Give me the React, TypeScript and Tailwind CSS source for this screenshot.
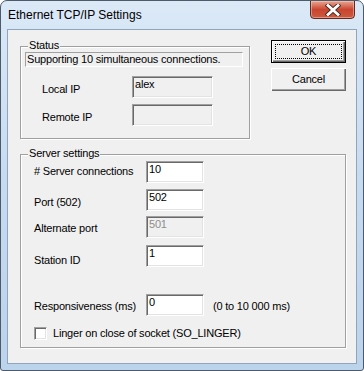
import React from 'react';

const font = "font-['Liberation_Sans',Arial,sans-serif]";

// classic sunken edit box
const editCls =
  'border border-t-[#a0a0a0] border-l-[#a0a0a0] border-r-white border-b-white shadow-[inset_1px_1px_0_#696969,inset_-1px_-1px_0_#e3e3e3] px-[2px] pt-[1px] text-[11px] leading-[13px]';

const Edit: React.FC<{ value: string; w: string; readOnly?: boolean; disabled?: boolean }> = ({ value, w, readOnly, disabled }) => (
  <div
    className={`${editCls} ${w} h-[22px] ${readOnly || disabled ? 'bg-[#f0f0f0]' : 'bg-white'} ${
      disabled ? 'text-[#8d8d8d]' : 'text-black'
    }`}
  >
    {value}
  </div>
);

const GroupBox: React.FC<{ title: string; className: string; children: React.ReactNode }> = ({ title, className, children }) => (
  <div className={`relative border border-[#a0a0a0] shadow-[inset_1px_1px_0_#fff,1px_1px_0_#fff] ${className}`}>
    <span className="absolute left-[7px] -top-[8px] bg-[#f0f0f0] px-[1px] text-[11px] leading-[13px]">{title}</span>
    {children}
  </div>
);

const Button: React.FC<{ label: string; isDefault?: boolean }> = ({ label, isDefault }) => (
  <div
    className={`w-[75px] h-[23px] bg-[#f0f0f0] flex items-center justify-center text-[11px] ${
      isDefault
        ? 'border border-black shadow-[inset_1px_1px_0_#fff,inset_-1px_-1px_0_#696969,inset_-2px_-2px_0_#a0a0a0]'
        : 'shadow-[inset_1px_1px_0_#fff,inset_-1px_-1px_0_#696969,inset_-2px_-2px_0_#a0a0a0]'
    }`}
  >
    {isDefault ? (
      <div className="w-[67px] h-[15px] border border-dotted border-black flex items-center justify-center leading-none">{label}</div>
    ) : (
      label
    )}
  </div>
);

const Row: React.FC<{ label: string; off: string; mt: string; children: React.ReactNode }> = ({ label, off, mt, children }) => (
  <div className={`flex items-start ${mt}`}>
    <span className={`w-[112px] text-[11px] leading-[13px] ${off}`}>{label}</span>
    {children}
  </div>
);

export default function App() {
  return (
    <div className={`w-[364px] h-[371px] ${font} text-black tracking-[-0.2px]`}>
      <div className="w-[364px] h-[371px] flex flex-col border border-[#4c5a6a] rounded-t-[7px] rounded-b-[3px] bg-gradient-to-b from-[#dbe9f7] via-[#c6daf0] to-[#bcd3ec] overflow-hidden">
        {/* title bar */}
        <div className="h-[28px] flex items-start pl-[7px] shrink-0">
          <span className="mt-[7px] text-[12px] leading-[15px] tracking-normal text-black">Ethernet TCP/IP Settings</span>
          <div className="ml-auto mr-[8px] w-[45px] h-[19px] -mt-[1px] rounded-b-[4px] border border-[#5f2a20] bg-gradient-to-b from-[#e8a391] via-[#c9452f] to-[#cc5a3e] flex items-center justify-center shadow-[inset_0_0_0_1px_rgba(255,220,210,0.45)]">
            <svg width="16" height="12" viewBox="0 0 16 12">
              <path d="M3 1.5 L13 10.5 M13 1.5 L3 10.5" stroke="#4a2a22" strokeWidth="4.6" strokeLinecap="square" />
              <path d="M3 1.5 L13 10.5 M13 1.5 L3 10.5" stroke="#ffffff" strokeWidth="2.8" strokeLinecap="square" />
            </svg>
          </div>
        </div>

        {/* client area */}
        <div className="ml-[6px] w-[350px] h-[335px] border border-[#8fa5bd] bg-[#f0f0f0] px-[12px]">
          <div className="flex items-start">
            <GroupBox title="Status" className="mt-[16px] w-[230px] h-[93px] shrink-0">
              <div className="ml-[4px] mt-[5px] w-[218px] h-[15px] border border-t-[#a0a0a0] border-l-[#a0a0a0] border-r-white border-b-white pl-[1px] text-[11px] leading-[13px]">
                Supporting 10 simultaneous connections.
              </div>
              <div className="flex items-start mt-[9px] ml-[21px]">
                <span className="w-[90px] mt-[7px] text-[11px] leading-[13px]">Local IP</span>
                <Edit value="alex" w="w-[81px]" readOnly />
              </div>
              <div className="flex items-start mt-[6px] ml-[21px]">
                <span className="w-[90px] mt-[7px] text-[11px] leading-[13px]">Remote IP</span>
                <Edit value="" w="w-[81px]" readOnly />
              </div>
            </GroupBox>
            <div className="ml-[21px] mt-[10px] flex flex-col gap-[5px]">
              <Button label="OK" isDefault />
              <Button label="Cancel" />
            </div>
          </div>

          <GroupBox title="Server settings" className="mt-[15px] w-[326px] h-[194px]">
            <div className="pl-[13px] pt-[6px]">
              <Row label="# Server connections" off="mt-[4px]" mt="mt-0">
                <Edit value="10" w="w-[58px]" />
              </Row>
              <Row label="Port (502)" off="mt-[7px]" mt="mt-[6px]">
                <Edit value="502" w="w-[58px]" />
              </Row>
              <Row label="Alternate port" off="mt-[6px]" mt="mt-[5px]">
                <Edit value="501" w="w-[58px]" disabled />
              </Row>
              <Row label="Station ID" off="mt-[9px]" mt="mt-[7px]">
                <Edit value="1" w="w-[58px]" />
              </Row>
              <Row label="Responsiveness (ms)" off="mt-[6px]" mt="mt-[27px]">
                <Edit value="0" w="w-[58px]" />
                <span className="ml-[9px] mt-[6px] text-[11px] leading-[13px]">(0 to 10 000 ms)</span>
              </Row>
              <div className="flex items-center mt-[11px]">
                <div className="w-[13px] h-[13px] bg-white border border-t-[#a0a0a0] border-l-[#a0a0a0] border-r-white border-b-white shadow-[inset_1px_1px_0_#696969,inset_-1px_-1px_0_#e3e3e3]" />
                <span className="ml-[6px] text-[11px] leading-[13px]">Linger on close of socket (SO_LINGER)</span>
              </div>
            </div>
          </GroupBox>
        </div>
      </div>
    </div>
  );
}
